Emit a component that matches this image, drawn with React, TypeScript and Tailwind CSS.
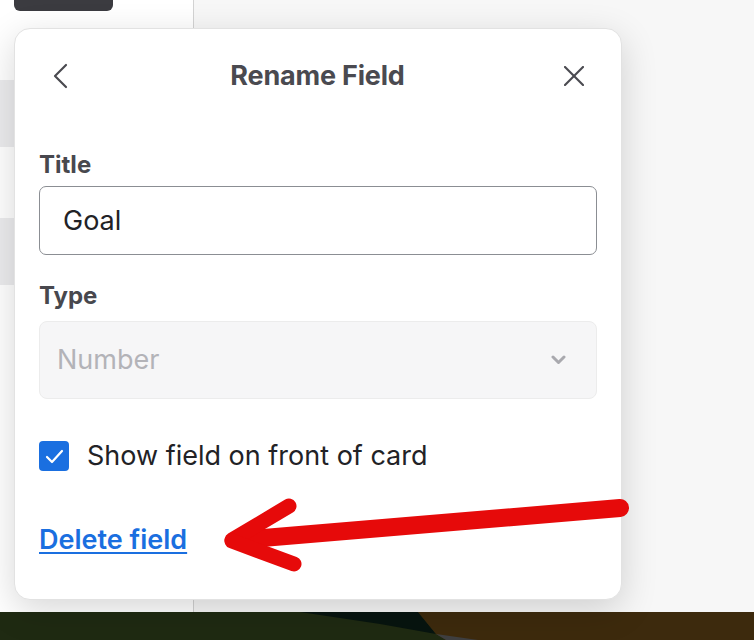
import React, { useState } from 'react';

const App: React.FC = () => {
    const [title, setTitle] = useState('Goal');
    const [showOnCard, setShowOnCard] = useState(true);

    return (
        <div className="relative w-[754px] h-[640px] overflow-hidden bg-[#f7f7f7]" style={{ fontFamily: 'Inter, "Noto Sans", sans-serif' }}>
            {/* page behind the popover */}
            <div className="flex h-[612px]">
                <aside className="relative w-[194px] shrink-0 bg-white border-r-[1.5px] border-[#d3d3d3]">
                    <div className="ml-[14px] w-[99px] h-[11px] rounded-b-[6px] bg-[#3b3b40]" />
                    <div className="mt-[69px] h-[67px] bg-[#ececee]" />
                    <div className="mt-[71px] h-[67px] bg-[#ececee]" />
                </aside>
                <div className="flex-1" />
            </div>
            <div className="h-[28px]">
                <svg width="754" height="28" viewBox="0 612 754 28">
                    <rect x="0" y="612" width="754" height="28" fill="#1f2a12" />
                    <polygon points="300,612 418,612 436,634 380,624" fill="#07140f" />
                    <polygon points="418,612 754,612 754,640 446,640 436,634" fill="#3d2a0d" />
                    <polygon points="436,634 446,640 478,640" fill="#3f3f40" />
                </svg>
            </div>

            {/* popover */}
            <div className="absolute left-[14px] top-[28px] w-[608px] h-[572px] rounded-[16px] bg-white border border-[#e2e2e2] shadow-[0_10px_36px_rgba(0,0,0,0.16)] px-[24px]">
                <div className="mt-[27px] h-[40px] flex items-center justify-between">
                    <button className="w-[40px] h-[40px] ml-[2px] flex items-center justify-center text-[#4a4a50]">
                        <svg width="16" height="26" viewBox="0 0 16 26" fill="none" stroke="currentColor" strokeWidth="2.2" strokeLinecap="round" strokeLinejoin="round">
                            <polyline points="13,2 2,13 13,24" />
                        </svg>
                    </button>
                    <h2 className="text-[27px] font-bold text-[#4a4a50] tracking-[-0.2px]">Rename Field</h2>
                    <button className="w-[40px] h-[40px] mr-[3px] flex items-center justify-center text-[#4a4a50]">
                        <svg width="20" height="20" viewBox="0 0 20 20" fill="none" stroke="currentColor" strokeWidth="2.2" strokeLinecap="round">
                            <line x1="1" y1="1" x2="19" y2="19" />
                            <line x1="19" y1="1" x2="1" y2="19" />
                        </svg>
                    </button>
                </div>

                <label className="block mt-[55px] text-[24px] leading-[28px] font-bold text-[#48484e]">Title</label>
                <input
                    value={title}
                    onChange={e => setTitle(e.target.value)}
                    className="mt-[7px] w-full h-[69px] rounded-[7px] border-[1.5px] border-[#8b8e93] px-[23px] text-[27px] text-[#222226] outline-none"
                />

                <label className="block mt-[27px] text-[24px] leading-[28px] font-bold text-[#48484e]">Type</label>
                <div className="mt-[11px] w-full h-[78px] rounded-[8px] border border-[#ececec] bg-[#f6f6f7] flex items-center justify-between pl-[17px] pr-[30px]">
                    <span className="text-[27px] text-[#b3b3b8]">Number</span>
                    <svg width="15" height="10" viewBox="0 0 15 10" fill="none" stroke="#a9a9ae" strokeWidth="3" strokeLinecap="round" strokeLinejoin="round">
                        <polyline points="2,2 7.5,7.5 13,2" />
                    </svg>
                </div>

                <label className="mt-[37px] flex items-center gap-[18px] cursor-pointer" onClick={() => setShowOnCard(!showOnCard)}>
                    <span className={`w-[30px] h-[30px] rounded-[4px] flex items-center justify-center ${showOnCard ? 'bg-[#1a6fe0]' : 'bg-white border border-[#8b8e93]'}`}>
                        {showOnCard && (
                            <svg width="19" height="15" viewBox="0 0 19 15" fill="none" stroke="white" strokeWidth="2.2" strokeLinecap="round" strokeLinejoin="round">
                                <polyline points="2,8 7,13 17,2" />
                            </svg>
                        )}
                    </span>
                    <span className="text-[27px] text-[#222226]">Show field on front of card</span>
                </label>

                <a href="#" className="inline-block mt-[43px] text-[27px] font-semibold text-[#1a6fe0] underline underline-offset-[3px] decoration-[2px]">Delete field</a>
            </div>

            {/* red annotation arrow */}
            <svg className="absolute left-0 top-0 pointer-events-none" width="754" height="640" viewBox="0 0 754 640">
                <g stroke="#e60a0a" strokeLinecap="round" strokeLinejoin="round" fill="none">
                    <line x1="240" y1="540" x2="620" y2="508" strokeWidth="18" />
                    <line x1="232" y1="540" x2="289" y2="506" strokeWidth="15" />
                    <line x1="232" y1="541" x2="294" y2="564" strokeWidth="15" />
                </g>
            </svg>
        </div>
    );
};

export default App;
